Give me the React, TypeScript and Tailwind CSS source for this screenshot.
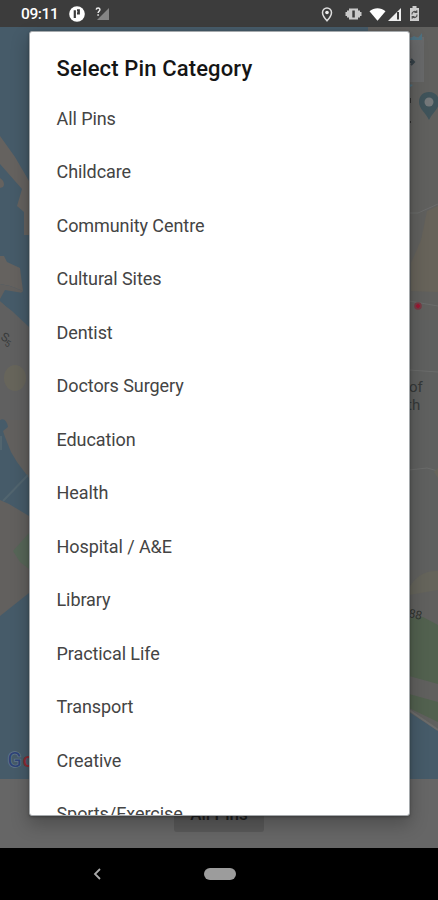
const categories = [
  "All Pins", "Childcare", "Community Centre", "Cultural Sites", "Dentist", "Doctors Surgery", "Education",
  "Health", "Hospital / A&E", "Library", "Practical Life", "Transport", "Creative", "Sports/Exercise",
];

function StatusBar() {
  return (
    <header className="flex h-[27px] shrink-0 items-center justify-between bg-[#3c3c3c] pl-[21px] pr-[18px] pt-px text-white">
      <div className="flex items-center">
        <span className="w-[37px] whitespace-nowrap pt-[2px] text-[15.5px] font-medium leading-none tracking-[-0.4px]">09:11</span>
        <svg className="ml-[11px]" width="16" height="16" viewBox="0 0 16 16">
          <circle cx="8" cy="8" r="7.8" fill="#fff" />
          <path d="M5.800 12V4.200M8 4.300h1.800v3H8" fill="none" stroke="#3c3c3c" strokeWidth="2.200" />
        </svg>
        <svg className="ml-[10px]" width="15" height="16" viewBox="0 0 15 16">
          <path d="M14 2v12H2z" fill="#858585" />
          <path d="M1.2 3.600c.3-2.400 4-2.200 3.700.2C4.800 5.200 3.100 5.300 3.100 7M3.100 8.300v1.500" fill="none" stroke="#eee" strokeWidth="1.500" />
        </svg>
      </div>
      <div className="flex items-center">
        <svg width="12" height="15" viewBox="0 0 12 15">
          <path d="M6 1a4.500 4.500 0 0 0-4.500 4.500C1.500 9 6 13.800 6 13.800S10.500 9 10.500 5.500A4.500 4.500 0 0 0 6 1z" fill="none" stroke="#ddd" strokeWidth="1.500" />
          <circle cx="6" cy="5.500" r="1.800" fill="#eee" />
        </svg>
        <svg className="ml-[12px]" width="17" height="14" viewBox="0 0 17 14">
          <path d="M.5 5h1.500V3.500h2V1.500h9v2h2V5h1.500v4h-1.500v1.500h-2v2H4v-2H2V9H.5z" fill="#c9c9c9" />
          <rect x="7.300" y="3.500" width="2.500" height="7" fill="#3c3c3c" />
        </svg>
        <svg className="ml-[7px]" width="17" height="15" viewBox="0 0 18 15">
          <path d="M0.500 4C5.500-.2 12.500-.2 17.500 4L9 14z" fill="#fff" />
        </svg>
        <svg className="ml-px" width="15" height="15" viewBox="0 0 15 15">
          <path d="M14 1v13H1z" fill="#eee" />
          <path d="M11 5v7.500" stroke="#3c3c3c" strokeWidth="2" />
        </svg>
        <svg className="ml-[7px]" width="11" height="16" viewBox="0 0 11 16">
          <path d="M3.500 0h4v2H10v13H1V2h2.500z" fill="#ccc" />
          <path d="M3 8.500a2.600 2.600 0 0 1 4.400-2.300M8 8.500a2.600 2.600 0 0 1-4.400 2.300M7.800 4.200v2.300H5.500M3.200 12.800v-2.300h2.300" fill="none" stroke="#505050" strokeWidth="1.100" />
        </svg>
      </div>
    </header>
  );
}

function MapView() {
  return (
    <svg className="block h-[752px] w-full shrink-0" viewBox="0 27 438 752">
      <rect y="27" width="438" height="752" fill="#62605e" />
      <path d="M0 27H368V330H29L13 313 0 301Z" fill="#465b69" />
      <path d="M0 136L15 157 29 181V235H24V212L17 206 22 189 0 164Z" fill="#65625f" />
      <path d="M0 178Q6 182 3 187L0 188Z" fill="#65625f" />
      <path d="M0 256H4L7 262 20 268 23 291 10 286 0 284Z" fill="#65625f" />
      <path d="M0 284L10 286 23 291 20 294 6 291 0 302Z" fill="#62605e" />
      <path d="M3 303L0 301V299L5 290 23 293 29 327Z" fill="#465b69" />
      <path d="M0 302L12 311 29 327V420H0Z" fill="#606060" />
      <ellipse cx="15" cy="378" rx="11" ry="13" fill="#67655b" />
      <path d="M0 420Q6 417 8 427L3 431 5 437 11 452 17 462 29 478V516L19 510 9 504 0 500Z" fill="#465b69" />
      <path d="M1 436V450M3 501L28 475" stroke="#52656f" strokeWidth="2" />
      <path d="M29 533L13 551 20 562 29 569Z" fill="#576658" />
      <path d="M0 616L29 593V779H0Z" fill="#465b69" />
      <path d="M409 27H438V779H409Z" fill="#60605e" />
      <path d="M409 320H438V570H409Z" fill="#5f605f" />
      <path d="M438 206L427 211 421 240 411 263V291L438 292Z" fill="#67635a" />
      <path d="M409 213H418L438 204M409 370L438 372M409 470L427 468 438 471M409 301L438 306" fill="none" stroke="#6b6c6b" strokeWidth="1" />
      <path d="M409 588Q419 570 438 571V590L409 595Z" fill="#65645b" />
      <path d="M438 468L434 472 438 478Z" fill="#66645b" />
      <path d="M409 618L423 617 438 625V684L409 676Z" fill="#52614f" />
      <path d="M409 694L438 702V722L409 708Z" fill="#52614f" />
      <path d="M409 712L438 731V779H409Z" fill="#465b69" />
      <path d="M409 710L438 730" stroke="#6c6c6b" strokeWidth="2" />
      <path d="M398 37H424V82H398Z" fill="#68696a" />
      <path d="M409 39l5-3 4 2 4-5v7H409ZM409 84l4 1-4 3Z" fill="#4e7180" />
      <path d="M407 62h7M411 59l3 3-3 3" fill="none" stroke="#364148" strokeWidth="2" />
      <path d="M429 92c-6 0-10 4-10 10 0 7 7 11 10 18 3-7 10-11 10-18 0-6-4-10-10-10z" fill="#3f535a" />
      <circle cx="429" cy="102" r="4.500" fill="#74787a" />
      <path d="M410 98v5M410 121v2" stroke="#333" strokeWidth="2" />
      <circle cx="418" cy="306" r="3.800" fill="#783b45" />
      <path d="M416 306h4M418 304v4" stroke="#9c1934" strokeWidth="2" />
      <g fontFamily="Roboto, sans-serif">
        <text x="409" y="392" fontSize="15" fill="#353939">of</text>
        <text x="407" y="410" fontSize="15" fill="#353939">th</text>
        <text x="408" y="617" fontSize="12" fill="#30342f" transform="rotate(12 408 617)">88</text>
        <text x="0" y="339" fontSize="12" fill="#383b3b" transform="rotate(30 0 339)">S</text>
        <text x="4" y="345" fontSize="9" fill="#383b3b" transform="rotate(30 4 345)">5</text>
        <text x="7.500" y="767" fontSize="21" fill="#2e4478" stroke="#64798a" strokeWidth="1.500" paintOrder="stroke">G</text>
        <text x="22.500" y="767" fontSize="20" fontWeight="500" fill="#8d2a33">o</text>
      </g>
    </svg>
  );
}

export default function App() {
  return (
    <main className="relative flex h-[900px] w-full flex-col overflow-hidden bg-[#616161] font-['Roboto',sans-serif]">
      <StatusBar />
      <MapView />
      <section className="flex h-[69px] shrink-0 items-start justify-center bg-[#666] pt-[17px]">
        <div className="flex h-[36px] w-[90px] items-center justify-center rounded-[3px] bg-[#595959] text-[17px] font-medium leading-none text-[#202020]">All Pins</div>
      </section>
      <nav className="flex h-[52px] shrink-0 items-center bg-black pl-[93px]">
        <svg width="9" height="12" viewBox="0 0 9 12"><path d="M7 1L2 6l5 5" fill="none" stroke="#aaa" strokeWidth="1.800" /></svg>
        <div className="ml-[102px] h-[12px] w-[32px] rounded-full bg-[#9c9c9c]" />
      </nav>
      <div role="dialog" className="absolute left-[29px] top-[31px] h-[785px] w-[381px] overflow-hidden rounded-[3px] border border-[#a5a9ac] bg-white pl-[26.500px] shadow-[0_8px_18px_1px_rgba(0,0,0,0.24),0_1px_3px_0_rgba(0,0,0,0.3)]">
        <h1 className="h-[59.500px] whitespace-nowrap pt-[22px] text-[22px] font-medium leading-[30px] tracking-[0.14px] text-[#151515]">Select Pin Category</h1>
        <ul>
          {categories.map((category) => (
            <li key={category} className="flex h-[53.530px] items-center whitespace-nowrap text-[18px] tracking-[-0.08px] text-[#444]">{category}</li>
          ))}
        </ul>
      </div>
    </main>
  );
}
